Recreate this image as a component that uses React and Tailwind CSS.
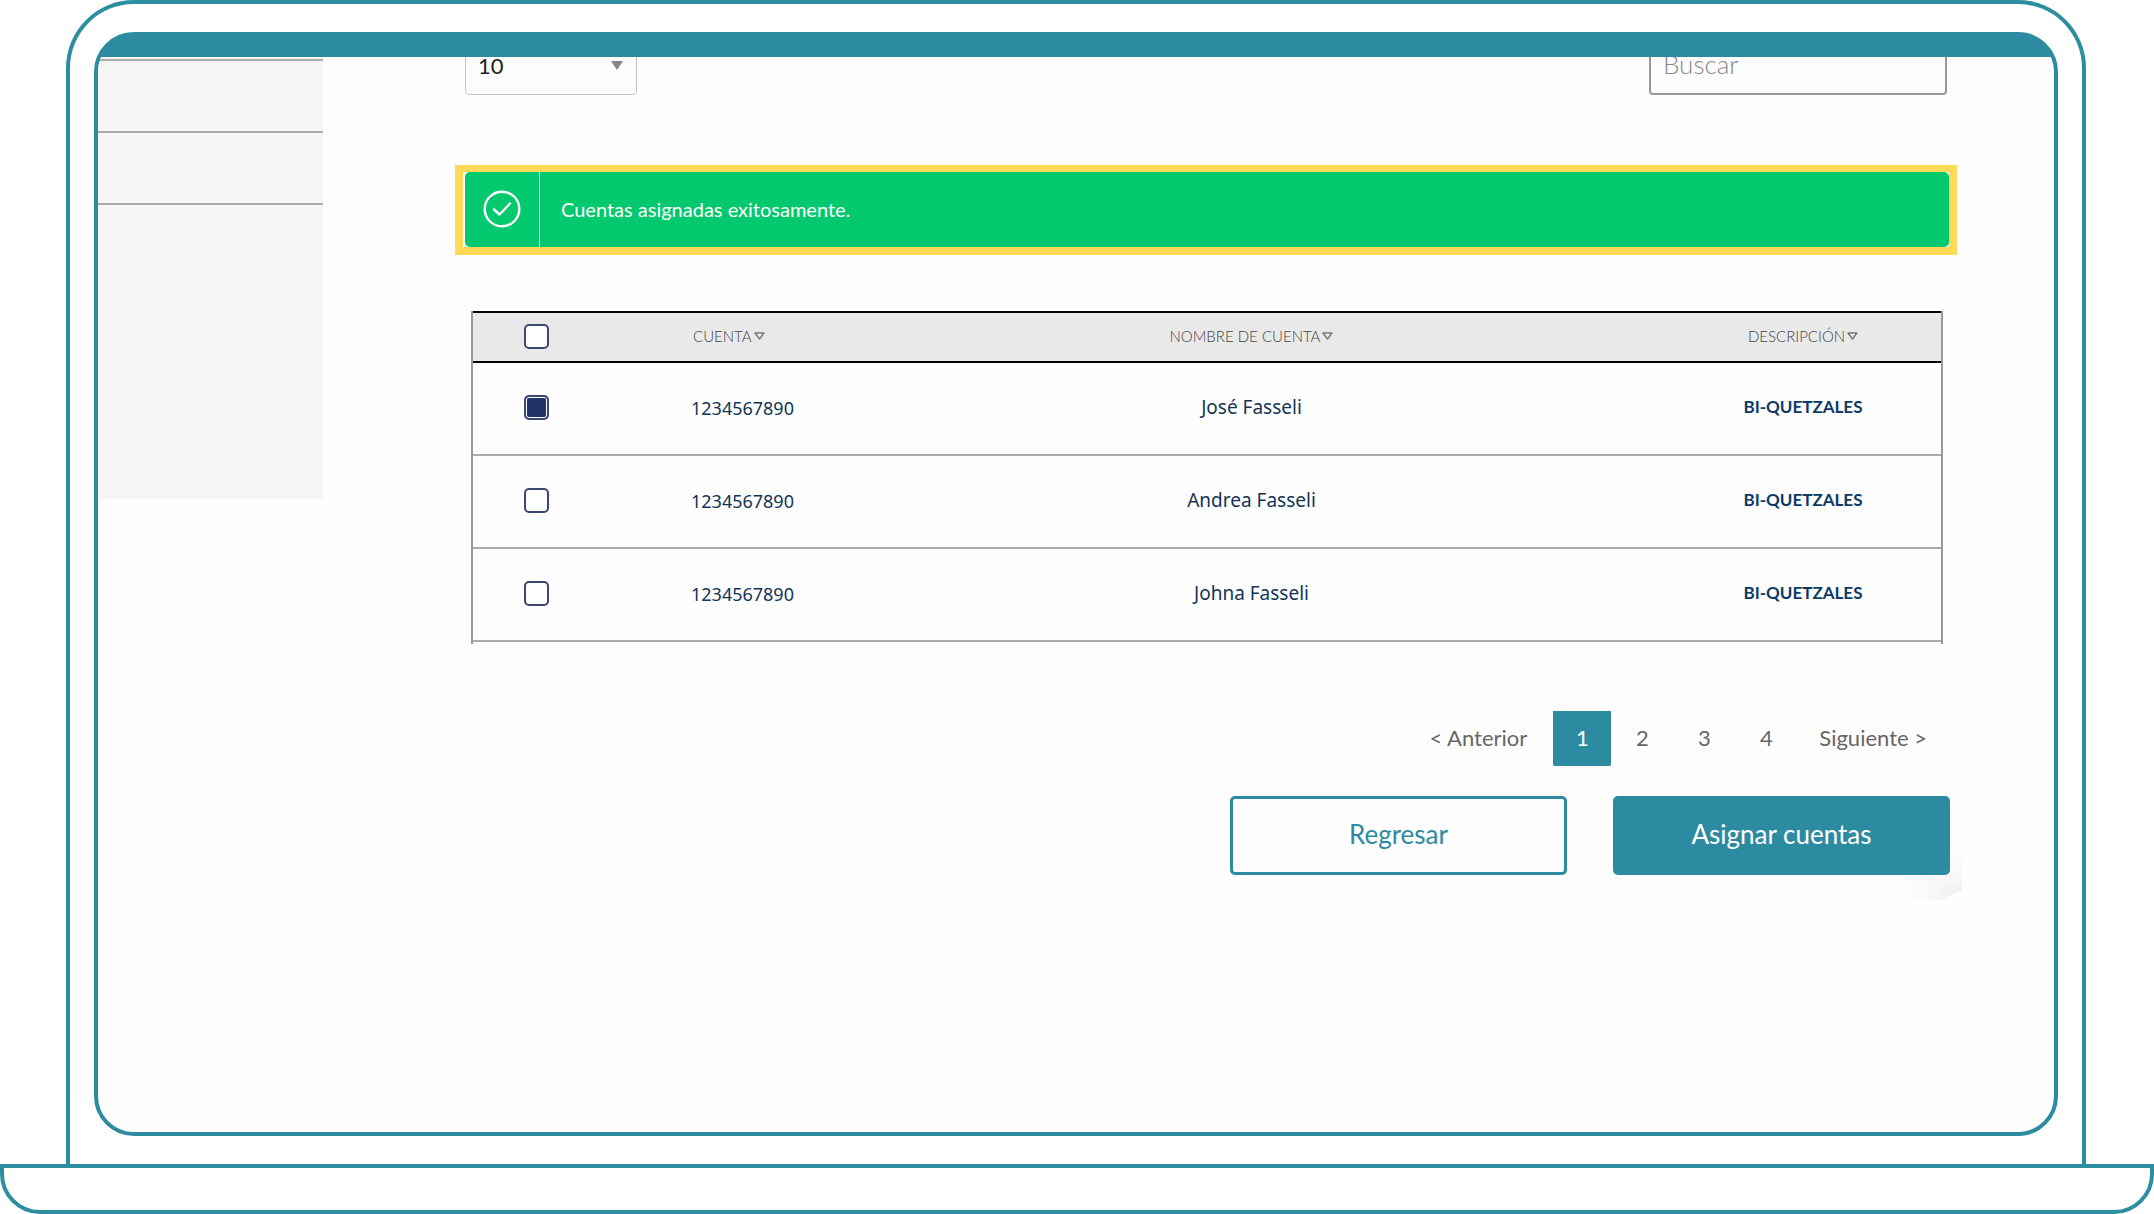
import React, { useState } from "react";

const accounts = [
  { id: 1, number: "1234567890", name: "José Fasseli", description: "BI-QUETZALES" },
  { id: 2, number: "1234567890", name: "Andrea Fasseli", description: "BI-QUETZALES" },
  { id: 3, number: "1234567890", name: "Johna Fasseli", description: "BI-QUETZALES" },
];

const pages = [1, 2, 3, 4];

const Checkbox = ({ label, checked, onChange }) => (
  <input
    type="checkbox"
    aria-label={label}
    checked={checked}
    onChange={onChange}
    className="block mx-auto size-[25px] appearance-none rounded-[5px] border-2 border-[#3b4870] bg-white checked:bg-[#1f3166] checked:shadow-[inset_0_0_0_1px_#fff]"
  />
);

const SortHeader = ({ children }) => (
  <button type="button" className="inline-flex items-center font-light text-[#444]">
    {children}
    <svg className="w-[11px] h-2 ml-0.5" viewBox="0 0 11 8" fill="none" stroke="#777" strokeWidth="1.4" strokeLinejoin="round">
      <path d="M1 1h9L5.5 7z" />
    </svg>
  </button>
);

const Toolbar = () => {
  const [size, setSize] = useState("10");
  const [search, setSearch] = useState("");
  return (
    <div className="-mt-[21px] mx-[10px] flex justify-between">
      <div className="relative">
        <select
          aria-label="Registros por página"
          value={size}
          onChange={(e) => setSize(e.target.value)}
          className="w-[172px] h-[59px] pl-3 pb-px appearance-none rounded border border-[#c4c4c4] bg-[#fdfdfd] text-[22px] text-[#222]"
        >
          <option>10</option>
          <option>25</option>
          <option>50</option>
        </select>
        <svg className="absolute right-[14px] top-[25px] w-3 h-[9px] pointer-events-none" viewBox="0 0 12 9" fill="#858585">
          <path d="M0 0h12L6 9z" />
        </svg>
      </div>
      <input
        type="text"
        aria-label="Buscar"
        placeholder="Buscar"
        value={search}
        onChange={(e) => setSearch(e.target.value)}
        className="w-[298px] h-[59px] px-3 pb-1 rounded border-2 border-[#999] bg-[#fdfdfd] text-[26px] font-light placeholder:text-[#888]"
      />
    </div>
  );
};

const Alert = () => (
  <div role="status" className="mt-[70px] border-8 border-t-[7px] border-[#ffd958] bg-white pl-[2px]">
    <div className="flex h-[75px] items-stretch rounded-[5px] bg-[#02c96e] text-white">
      <div className="flex w-[75px] items-center justify-center border-r border-white pb-px">
        <svg className="size-[38px]" viewBox="0 0 38 38" fill="none" stroke="#fff" strokeWidth="2.4" strokeLinecap="round" strokeLinejoin="round">
          <circle cx="19" cy="19" r="17.3" />
          <path d="M11 19.5l5.5 5L27 13.5" />
        </svg>
      </div>
      <p className="flex items-center pb-0.5 pl-[21px] text-xl">Cuentas asignadas exitosamente.</p>
    </div>
  </div>
);

const AccountsTable = ({ selected, toggle, toggleAll }) => (
  <div className="mt-14 ml-4 mr-[14px] border-x-2 border-[#999] pb-0.5">
    <table className="w-full table-fixed border-separate border-spacing-0">
      <thead>
        <tr className="h-[52px] bg-[#e9e9e9] text-[15px] [&>th]:border-y-2 [&>th]:border-black [&>th]:p-0 [&>th]:pb-0.5 [&>th]:font-light">
          <th className="w-[126px]">
            <Checkbox
              label="Seleccionar todas"
              checked={selected.length === accounts.length}
              onChange={toggleAll}
            />
          </th>
          <th className="w-[239px] text-left">
            <div className="pl-[94px]"><SortHeader>CUENTA</SortHeader></div>
          </th>
          <th><SortHeader>NOMBRE DE CUENTA</SortHeader></th>
          <th className="w-[276px]"><SortHeader>DESCRIPCIÓN</SortHeader></th>
        </tr>
      </thead>
      <tbody>
        {accounts.map((account) => (
          <tr
            key={account.id}
            className="h-[93px] text-center text-lg text-[#123456] [&>td]:border-b-2 [&>td]:border-[#aaa] [&>td]:p-0 [&>td]:pb-0.5"
          >
            <td>
              <Checkbox
                label={`Seleccionar ${account.name}`}
                checked={selected.includes(account.id)}
                onChange={() => toggle(account.id)}
              />
            </td>
            <td className="text-left font-['Noto_Sans',sans-serif]">
              <div className="pl-[92px]">{account.number}</div>
            </td>
            <td className="font-['Noto_Sans',sans-serif] text-[19px]">{account.name}</td>
            <td className="text-[17px] font-bold text-[#0c3a66]">{account.description}</td>
          </tr>
        ))}
      </tbody>
    </table>
  </div>
);

const Pagination = () => {
  const [page, setPage] = useState(1);
  return (
    <nav aria-label="Paginación" className="mt-[67px] mr-[30px] flex items-center justify-end text-[22px] text-[#666]">
      <button type="button" className="mr-[26px] pb-0.5">&lt; Anterior</button>
      {pages.map((n) => (
        <button
          key={n}
          type="button"
          onClick={() => setPage(n)}
          className={
            n === page
              ? "h-[55px] w-[58px] rounded-b-xs bg-[#2c8ba1] pb-0.5 text-white"
              : "h-[55px] w-[62px] pb-0.5"
          }
        >
          {n}
        </button>
      ))}
      <button type="button" className="ml-[22px] pb-0.5">Siguiente &gt;</button>
    </nav>
  );
};

const Actions = () => (
  <div className="relative mt-[30px] mr-[7px] flex justify-end gap-[46px] text-[26px]">
    <svg className="absolute -right-3 -bottom-[25px] w-20 h-[70px]" viewBox="0 0 80 70">
      <defs>
        <radialGradient id="corner" cx="1" cy="1" r="0.8">
          <stop offset="0" stopColor="#ececec" />
          <stop offset="0.4" stopColor="#f7f7f7" />
          <stop offset="1" stopColor="#fefefe" />
        </radialGradient>
      </defs>
      <path d="M0 0h80v61q-10 2-18 9H0z" fill="url(#corner)" />
    </svg>
    <button type="button" className="relative h-[79px] w-[337px] rounded-[5px] border-[3px] border-[#2c8ba1] pb-0.5 text-[#2c8ba1]">
      Regresar
    </button>
    <button type="button" className="relative h-[79px] w-[337px] rounded-[5px] bg-[#2c8ba1] pb-0.5 text-white">
      Asignar cuentas
    </button>
  </div>
);

const Sidebar = () => (
  <aside className="w-[225px] shrink-0 self-start bg-[#f5f5f5] pt-[2px]">
    <div className="h-[74px] border-y-2 border-[#ababab]"></div>
    <div className="h-[72px] border-b-2 border-[#ababab]"></div>
    <div className="h-[294px]"></div>
  </aside>
);

export default function App() {
  const [selected, setSelected] = useState([1]);

  function toggle(id) {
    setSelected((prev) =>
      prev.includes(id) ? prev.filter((val) => val !== id) : [...prev, id]
    );
  }

  function toggleAll() {
    setSelected((prev) =>
      prev.length === accounts.length ? [] : accounts.map((a) => a.id)
    );
  }

  return (
    <div className="flex min-h-screen flex-col bg-white font-[Lato,sans-serif]">
      <div className="ml-[66px] mr-[68px] flex flex-1 flex-col rounded-t-[68px] border-4 border-b-0 border-[#2c8e9f] px-6 py-7">
        <div className="flex flex-1 flex-col overflow-hidden rounded-[40px] border-4 border-[#2c8ba1] bg-[linear-gradient(#2c8ba1_21px,#fefefe_21px)] bg-no-repeat">
          <header className="h-[21px] shrink-0"></header>
          <div className="flex flex-1 overflow-hidden">
            <Sidebar />
            <main className="flex-1 pl-[132px] pr-[97px]">
              <Toolbar />
              <Alert />
              <AccountsTable selected={selected} toggle={toggle} toggleAll={toggleAll} />
              <Pagination />
              <Actions />
            </main>
          </div>
        </div>
      </div>
      <div className="h-[50px] rounded-b-[40px] border-4 border-[#2c8e9f]"></div>
    </div>
  );
}
